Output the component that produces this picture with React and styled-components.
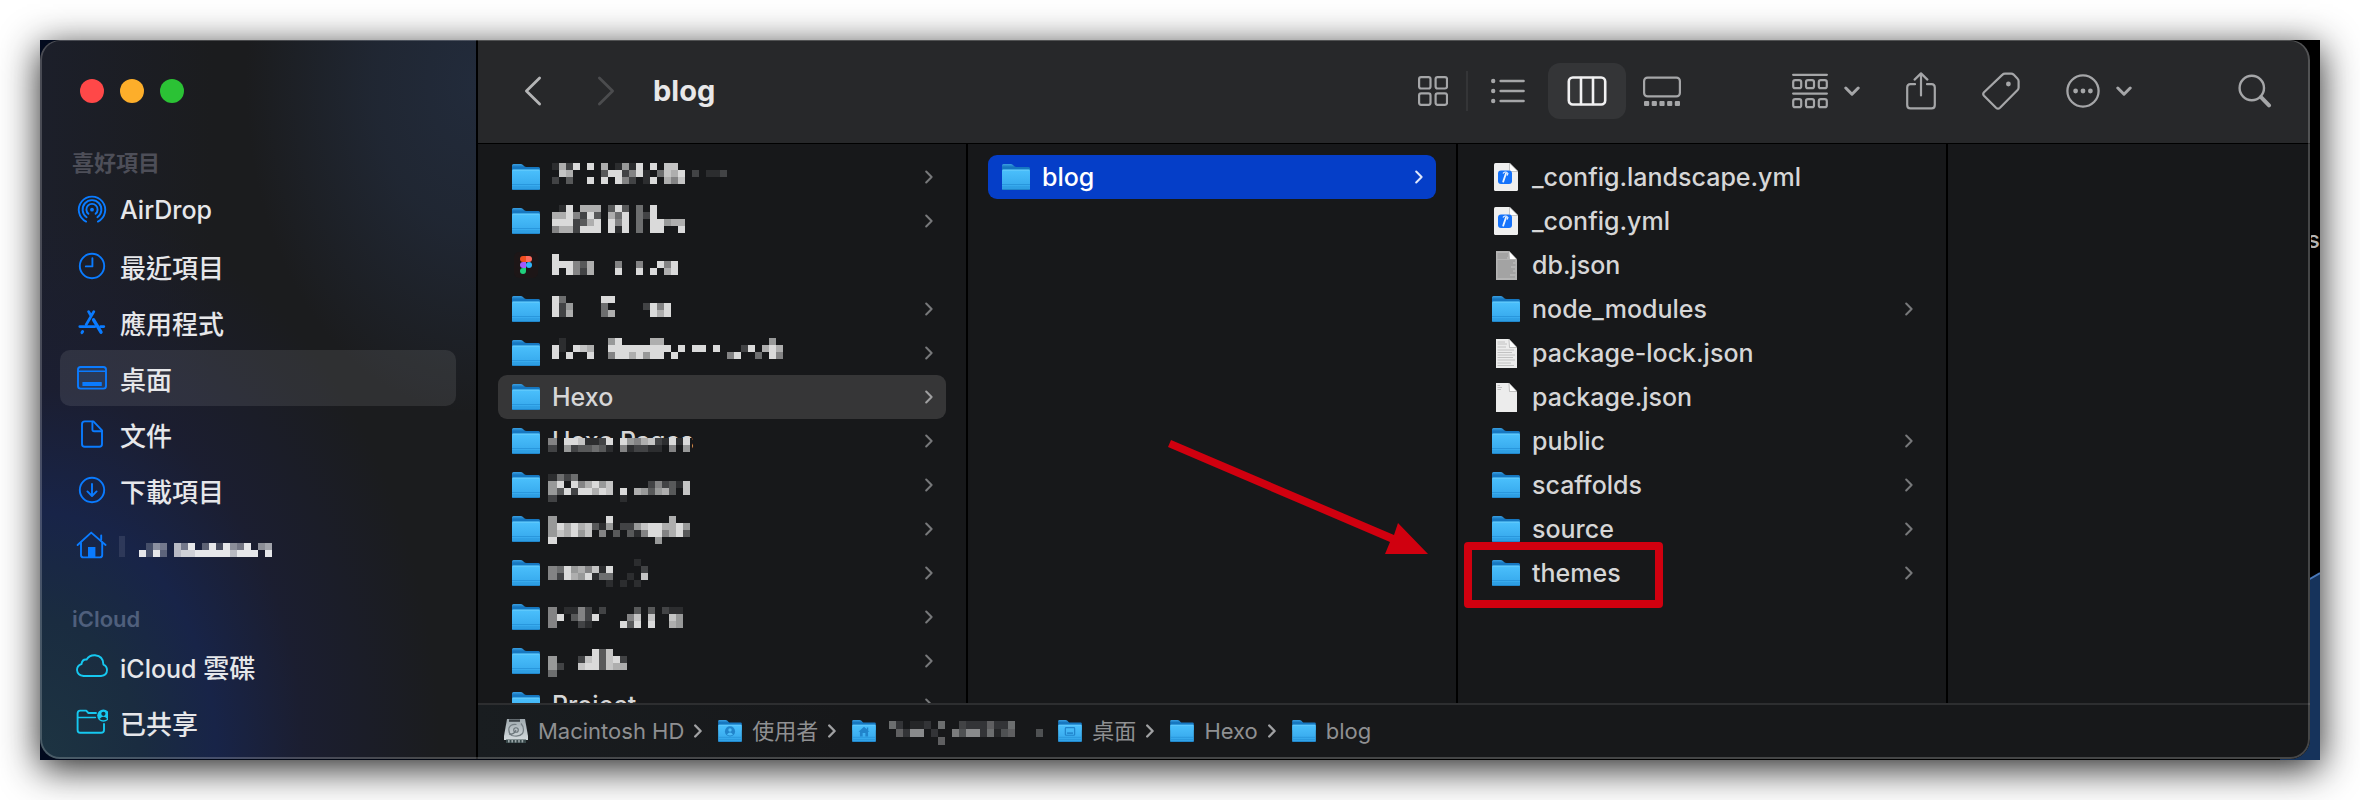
import React from "react";
import styled, { createGlobalStyle } from "styled-components";

const GlobalStyle = createGlobalStyle`
  * { box-sizing: border-box; }
  body {
    margin: 0;
    background: #fff;
    font-family: Inter, "Noto Sans CJK TC", sans-serif;
    -webkit-font-smoothing: antialiased;
  }
  button { font: inherit; color: inherit; background: none; border: 0; padding: 0; }
  ul, ol { list-style: none; margin: 0; padding: 0; }
  svg { display: block; flex: none; }
`;

const Page = styled.div`
  padding: 40px;
`;

const Desktop = styled.div`
  position: relative;
  display: flex;
  height: calc(100vh - 80px);
  min-height: 480px;
  padding: 0 10px 1px 0;
  background: linear-gradient(90deg, #020a1e, #000 40%);
  box-shadow: 0 8px 36px rgba(0, 0, 0, 0.88);
`;

const Wallpaper = styled.svg`
  position: absolute;
  right: 0;
  bottom: 0;
`;

const DesktopLabel = styled.span`
  position: absolute;
  right: 0;
  top: 184px;
  width: 9px;
  overflow: hidden;
  font-size: 24px;
  line-height: 32px;
  font-weight: 500;
  color: #b5b5b5;
  direction: rtl;
`;

const Window = styled.div`
  position: relative;
  flex: 1;
  min-width: 0;
  display: flex;
  border-radius: 20px;
  overflow: hidden;
  background: #17181a;
  color: #dcdcdd;
  &::after {
    content: "";
    position: absolute;
    inset: 0;
    border: 2px solid rgba(255, 255, 255, 0.2);
    border-top-width: 1px;
    border-radius: 20px;
    pointer-events: none;
  }
`;

const Sidebar = styled.nav`
  flex: 0 0 438px;
  padding: 39px 20px 0;
  overflow: hidden;
  border-right: 2px solid #000;
  background:
    radial-gradient(ellipse 230px 330px at 100% 6%, #222b3b 0%, rgba(34, 43, 59, 0.7) 45%, rgba(28, 29, 31, 0) 100%),
    radial-gradient(ellipse 400px 560px at 0% 100%, #1d3442 0%, #1a2c40 25%, #182448 44%, rgba(27, 30, 50, 0.9) 66%, rgba(28, 29, 31, 0) 100%),
    linear-gradient(90deg, #1c1f2a, #1b1c1e 40%);
`;

const Lights = styled.div`
  display: flex;
  gap: 16px;
  padding-left: 20px;
  margin-bottom: 41px;
`;

const Light = styled.button`
  width: 24px;
  height: 24px;
  border-radius: 50%;
  background: ${(p) => p.$color};
`;

const GroupTitle = styled.h2`
  margin: 26px 0 0;
  padding-left: 12px;
  font-size: 22px;
  line-height: 38px;
  font-weight: 600;
  color: ${(p) => p.$color};
`;

const Place = styled.a`
  display: flex;
  align-items: center;
  height: 56px;
  padding-left: 16px;
  gap: 12px;
  border-radius: 10px;
  font-size: 26px;
  font-weight: 500;
  color: #e6e7ea;
  text-decoration: none;
  background: ${(p) => (p.$current ? "rgba(255, 255, 255, 0.09)" : "none")};
`;

const Latin = styled.span`
  font-size: 25px;
`;

const Main = styled.main`
  flex: 1;
  min-width: 0;
  display: flex;
  flex-direction: column;
`;

const Toolbar = styled.header`
  flex: 0 0 104px;
  display: flex;
  align-items: center;
  padding: 0 38px 2px 39px;
  background: #27282a;
  border-bottom: 1px solid #000;
  color: #a5a6a8;
`;

const NavButton = styled.button`
  display: grid;
  place-items: center;
  width: 32px;
  height: 56px;
  margin-right: 41px;
  color: ${(p) => (p.disabled ? "#4b4c4e" : "#b4b5b6")};
`;

const Title = styled.h1`
  flex: 1;
  margin: 0 0 0 -10px;
  font-size: 29px;
  line-height: 40px;
  font-weight: 700;
  color: #e8e8e9;
`;

const Views = styled.div`
  display: flex;
  align-items: center;
  margin-right: 94px;
`;

const ViewButton = styled.button`
  display: grid;
  place-items: center;
  width: ${(p) => p.$width}px;
  height: 56px;
  border-radius: 12px;
  background: ${(p) => (p.$active ? "#343537" : "none")};
  color: ${(p) => (p.$active ? "#f1f1f2" : "inherit")};
`;

const Separator = styled.span`
  width: 2px;
  height: 40px;
  background: #343537;
`;

const Actions = styled.div`
  display: flex;
  align-items: center;
  gap: 46px;
`;

const Action = styled.button`
  display: flex;
  align-items: center;
  gap: 16px;
`;

const SearchAction = styled(Action)`
  margin-left: 60px;
`;

const Columns = styled.div`
  flex: 1;
  min-height: 0;
  display: flex;
  overflow: hidden;
`;

const Column = styled.ul`
  flex: 0 0 490px;
  padding: 11px 20px 0;
  border-right: 2px solid #000;
`;

const LastColumn = styled.div`
  flex: 1;
`;

const Item = styled.li`
  position: relative;
`;

const Row = styled.button`
  display: flex;
  align-items: center;
  gap: 12px;
  width: 100%;
  height: 44px;
  padding: 0 13px 0 14px;
  border-radius: 9px;
  text-align: left;
  font-size: 25px;
  line-height: 32px;
  font-weight: 500;
  background: ${(p) => ({ active: "#053ec8", open: "#363637" })[p.$tone] || "none"};
  color: ${(p) => (p.$tone === "active" ? "#fff" : "#d6d6d7")};
  --chevron: ${(p) => ({ active: "#dfe6fa", open: "#a0a0a1" })[p.$tone] || "#77787a"};
`;

const IconSlot = styled.span`
  flex: none;
  display: grid;
  place-items: center;
  width: 28px;
  height: 44px;
`;

const Label = styled.span`
  flex: 1;
  position: relative;
  white-space: nowrap;
`;

const Censor = styled.span`
  position: absolute;
  left: 0;
  top: -6px;
`;

const PixelArt = styled.svg`
  overflow: visible;
  color: ${(p) => p.$tone || "#dadada"};
`;

const Frame = styled.span`
  position: absolute;
  left: -14px;
  top: -9px;
  width: 199px;
  height: 66px;
  border: 8px solid #d0000f;
  border-radius: 4px;
  pointer-events: none;
`;

const Arrow = styled.svg`
  position: absolute;
  left: -310px;
  top: -112px;
  pointer-events: none;
`;

const PathBar = styled.footer`
  flex: 0 0 56px;
  padding: 0 0 2px 26px;
  border-top: 2px solid #2d2e30;
  background: linear-gradient(90deg, #191d20, #17181a 20%);
`;

const PathList = styled.ol`
  display: flex;
  align-items: center;
  height: 52px;
  gap: 16px;
`;

const PathItem = styled.li`
  display: flex;
  align-items: center;
  gap: 10px;
  font-size: 22px;
  line-height: 32px;
  color: #8f9092;
`;

const HiddenDefs = styled.svg`
  position: absolute;
`;

/* ---------- icons ---------- */

const Defs = () => (
  <HiddenDefs width="0" height="0" aria-hidden="true">
    <defs>
      <linearGradient id="folderBack" x1="0" y1="0" x2="0" y2="1">
        <stop offset="0" stopColor="#3aa0e2" />
        <stop offset="0.25" stopColor="#1677c0" />
      </linearGradient>
      <linearGradient id="folderFront" x1="0" y1="0" x2="0" y2="1">
        <stop offset="0" stopColor="#4bc0fc" />
        <stop offset="1" stopColor="#33a5ea" />
      </linearGradient>
      <linearGradient id="disk" x1="0" y1="0" x2="0" y2="1">
        <stop offset="0" stopColor="#9fa9ae" />
        <stop offset="1" stopColor="#d3dadd" />
      </linearGradient>
    </defs>
  </HiddenDefs>
);

const Folder = ({ width = 28, height = 26, mark }) => (
  <svg width={width} height={height} viewBox="0 0 28 26">
    <path d="M0 1.5Q0 0 1.5 0H8.5Q10 0 11 1L12 2Q13 3 14.5 3H26.5Q28 3 28 4.5V12H0Z" fill="url(#folderBack)" />
    <path d="M0 7Q0 5.6 1.5 5.6H26.5Q28 5.6 28 7V24.5Q28 26 26.5 26H1.5Q0 26 0 24.5Z" fill="url(#folderFront)" />
    <path d="M0 20.5H28M0 23H28" stroke="#2794da" strokeWidth="0.9" />
    <path d="M0.3 25.3H27.7" stroke="#1c7fc4" strokeWidth="1" />
    <path d="M0.5 6.2H27.5" stroke="#6fcffd" strokeWidth="0.8" />
    {mark === "user" && (
      <g>
        <circle cx="14" cy="13.5" r="6" fill="#2184cb" />
        <circle cx="14" cy="11.8" r="2" fill="#4bbcf8" />
        <path d="M10.4 17Q14 12.6 17.6 17Q14 19.6 10.4 17Z" fill="#4bbcf8" />
      </g>
    )}
    {mark === "home" && (
      <path d="M7.5 14L14 8L17.4 11V9H19V12.6L20.5 14H18.8V19.5H15.6V15.5H12.4V19.5H9.2V14Z" fill="#2184cb" />
    )}
    {mark === "desktop" && (
      <g>
        <rect x="8.5" y="9" width="11" height="9" rx="1" fill="none" stroke="#2184cb" strokeWidth="1.4" />
        <path d="M10.5 15.5H17.5" stroke="#2184cb" strokeWidth="1.8" />
      </g>
    )}
  </svg>
);

const FigmaFile = () => (
  <svg width="28" height="28" viewBox="0 0 28 28">
    <rect x="2" y="1" width="24" height="26" rx="5" fill="#1d1617" />
    <path d="M11 5H14V11H11A3 3 0 0 1 11 5Z" fill="#f24e1e" />
    <path d="M14 5H17A3 3 0 0 1 17 11H14Z" fill="#ff6a5e" />
    <path d="M11 11H14V17H11A3 3 0 0 1 11 11Z" fill="#a259ff" />
    <circle cx="17" cy="14" r="3" fill="#2fb4fa" />
    <path d="M11 17H14V20A3 3 0 1 1 11 17Z" fill="#20cf7d" />
  </svg>
);

const YmlFile = () => (
  <svg width="24" height="28" viewBox="0 0 24 28">
    <path d="M1.5 0H15.5L24 8.5V26.5Q24 28 22.5 28H1.5Q0 28 0 26.5V1.5Q0 0 1.5 0Z" fill="#efefef" />
    <path d="M15.5 0L24 8.5H17Q15.5 8.5 15.5 7Z" fill="#fff" stroke="#b9b9b9" strokeWidth="0.8" />
    <rect x="4" y="7.5" width="14" height="13.5" rx="3" fill="#1472fb" />
    <path d="M9.2 18.6L12 10.4" stroke="#e9f2ff" strokeWidth="1.8" fill="none" strokeLinecap="round" />
    <path d="M9.2 10.2Q10.6 8.6 12.6 9.2L14 10.6L13.2 12.2" stroke="#e9f2ff" strokeWidth="1.1" fill="none" strokeLinecap="round" />
  </svg>
);

const TextFile = ({ shade = "#ececec", lines = [], ink = "#bdbdbd" }) => (
  <svg width="21" height="29" viewBox="0 0 21 29">
    <path d="M0 0H13L21 8.5V29H0Z" fill={shade} />
    {lines.map(([y, w]) => (
      <path key={y} d={`M1.5 ${y}H${w}`} stroke={ink} strokeWidth="0.9" />
    ))}
    <path d="M13 0L21 8.5H13.5Z" fill="#fff" stroke="#8d8d8d" strokeWidth="0.5" />
  </svg>
);

const dbLines = [[3, 12], [5, 12], [7, 11], [10, 19], [12, 17], [14, 19.5], [16, 15], [18, 19], [20, 17], [22, 19.5], [24, 14], [26, 19]];
const lockLines = [[3, 9], [5, 11], [8, 10], [11, 18], [13.5, 16], [16, 19], [18.5, 17], [21, 19], [24, 15], [26.5, 18]];
const packageLines = [[2.5, 4], [4.5, 6], [6.5, 5]];

const Disk = () => (
  <svg width="24" height="24" viewBox="0 0 24 24">
    <path d="M3 0H21L24 17V21H0V17Z" fill="url(#disk)" />
    <path d="M5 1.6H16" stroke="#3b4246" strokeWidth="2.4" />
    <path d="M2 20.5H22V24H2Z" fill="#39494b" />
    <path d="M4 22.3H20" stroke="#9aa5a8" strokeWidth="2.4" strokeDasharray="1.6 1.8" />
    <path d="M17 4.5Q21 9 18.5 14.5Q15 18.5 8 16.5Q4 14 5 9Q7 4.5 12.5 5.5" stroke="#747e83" strokeWidth="1.2" fill="none" />
    <circle cx="12" cy="11" r="2.3" fill="none" stroke="#6a7479" strokeWidth="1.1" />
    <path d="M12 11Q10 16 5 15" stroke="#6a7479" strokeWidth="1.1" fill="none" />
  </svg>
);

const Chevron = ({ color = "var(--chevron)", strokeWidth = 2 }) => (
  <svg width="8" height="14" viewBox="0 0 8 14" fill="none" stroke={color} strokeWidth={strokeWidth} strokeLinecap="round" strokeLinejoin="round">
    <path d="M1.2 1.5L6.6 7L1.2 12.5" />
  </svg>
);

const line = { fill: "none", stroke: "currentColor", strokeLinecap: "round", strokeLinejoin: "round" };

const NavArrow = ({ d }) => (
  <svg width="18" height="30" viewBox="0 0 18 30" {...line} strokeWidth="2.8">
    <path d={d} />
  </svg>
);

const DownChevron = () => (
  <svg width="16" height="12" viewBox="0 0 16 12" {...line} strokeWidth="3">
    <path d="M1.8 3L8 9.2L14.2 3" />
  </svg>
);

const GridIcon = () => (
  <svg width="30" height="30" viewBox="0 0 30 30" {...line} strokeWidth="2.2">
    {[1.1, 17.6].map((x) => [1.1, 17.4].map((y) => <rect key={`${x}${y}`} x={x} y={y} width="11.4" height="11.4" rx="2" />))}
  </svg>
);

const ListIcon = () => (
  <svg width="34" height="26" viewBox="0 0 34 26" {...line} strokeWidth="2.4">
    {[3, 13, 23].map((y) => (
      <g key={y}>
        <circle cx="2.2" cy={y} r="2.2" fill="currentColor" stroke="none" />
        <path d={`M9.6 ${y}H32.6`} />
      </g>
    ))}
  </svg>
);

const ColumnsIcon = () => (
  <svg width="40" height="30" viewBox="0 0 40 30" {...line} strokeWidth="2.6">
    <rect x="1.8" y="1.5" width="36.4" height="27" rx="4" />
    <path d="M14 2V28M26 2V28" />
  </svg>
);

const GalleryIcon = () => (
  <svg width="38" height="30" viewBox="0 0 38 30" {...line} strokeWidth="2.2">
    <rect x="1.1" y="1.6" width="35.8" height="18.8" rx="3.5" />
    {[1, 8.7, 16.4, 24.1, 31.8].map((x) => (
      <rect key={x} x={x} y="25" width="5.2" height="5" rx="1" fill="currentColor" stroke="none" />
    ))}
  </svg>
);

const GroupIcon = () => (
  <svg width="36" height="36" viewBox="0 0 36 36" {...line} strokeWidth="2.2">
    <path d="M1.1 1.8H34.9M1.1 20.6H34.9" />
    {[7.2, 26.2].map((y) => [1.2, 14, 26.8].map((x) => <rect key={`${x}${y}`} x={x} y={y} width="8" height="8" rx="2" />))}
  </svg>
);

const ShareIcon = () => (
  <svg width="30" height="38" viewBox="0 0 30 38" {...line} strokeWidth="2.2">
    <path d="M9 12.2H4.4Q1.2 12.2 1.2 15.4V33Q1.2 36.4 4.4 36.4H25.6Q28.8 36.4 28.8 33V15.4Q28.8 12.2 25.6 12.2H21" />
    <path d="M15 23.5V1.6M8.6 7.6L15 1.4L21.4 7.6" />
  </svg>
);

const TagIcon = () => (
  <svg width="38" height="38" viewBox="0 0 38 38" {...line} strokeWidth="2.2">
    <path d="M20.5 2.6Q21.5 1.6 23 1.6H29.2Q30.6 1.6 31.6 2.6L35.6 6.8Q36.6 7.8 36.6 9.2V15.6Q36.6 17 35.6 18L18 35.8Q16 37.6 14 35.8L2 23.8Q0.4 22 2 20.2Z" />
    <circle cx="26.4" cy="12" r="2.4" fill="currentColor" stroke="none" />
  </svg>
);

const MoreIcon = () => (
  <svg width="34" height="34" viewBox="0 0 34 34" {...line} strokeWidth="2.3">
    <circle cx="17" cy="17" r="15.6" />
    {[9.6, 17, 24.4].map((x) => <circle key={x} cx={x} cy="17" r="2.4" fill="currentColor" stroke="none" />)}
  </svg>
);

const SearchIcon = () => (
  <svg width="34" height="34" viewBox="0 0 34 34" {...line} strokeWidth="2.4">
    <circle cx="13.8" cy="14" r="12.2" />
    <path d="M23 23.2L31 31.4" strokeWidth="4" />
  </svg>
);

const blue = "#0a7bff";
const cyan = "#16c8f0";
const Side = ({ color = blue, children }) => (
  <svg width="32" height="32" viewBox="0 0 32 32" {...line} stroke={color} strokeWidth="1.9">
    {children}
  </svg>
);

const AirDropIcon = () => (
  <Side>
    <path d="M10.1 27.6A13.2 13.2 0 1 1 21.9 27.6" />
    <path d="M10.6 23.2A9.4 9.4 0 1 1 21.4 23.2" />
    <path d="M12.4 19.8A5.6 5.6 0 1 1 19.6 19.8" />
    <circle cx="16" cy="15.7" r="1.9" fill={blue} stroke="none" />
  </Side>
);
const ClockIcon = () => (
  <Side>
    <circle cx="16" cy="16" r="12.2" />
    <path d="M16.4 8.2V16.4H9.8" />
  </Side>
);
const AppsIcon = () => (
  <Side>
    <path d="M17.8 5.6L10.2 18.6M12.6 5.6L15.2 10" strokeWidth="2.8" />
    <path d="M3.8 20.6H19M24.6 20.6H27.8" strokeWidth="2.8" />
    <path d="M17.6 13.8L25 26.2" strokeWidth="3.4" />
    <path d="M6.6 25.6L6 26.6" strokeWidth="3" />
  </Side>
);
const DesktopIcon = () => (
  <Side>
    <rect x="2" y="5" width="28" height="21.6" rx="2.6" fill="rgba(10,123,255,0.12)" />
    <path d="M2.4 9.2H29.6" strokeWidth="1.5" />
    <rect x="6.4" y="20" width="19.4" height="4" rx="0.6" fill={blue} stroke="none" />
  </Side>
);
const DocIcon = () => (
  <Side>
    <path d="M17.4 3.4H8.8Q6 3.4 6 6.2V26Q6 28.8 8.8 28.8H23.2Q26 28.8 26 26V12.4Z" />
    <path d="M16.4 3.6V11.4Q16.4 13.2 18.2 13.2H25.8" />
  </Side>
);
const DownloadIcon = () => (
  <Side>
    <circle cx="16" cy="16" r="12.2" />
    <path d="M16 10V21.4M11.4 17.4L16 22L20.6 17.4" />
  </Side>
);
const HomeIcon = () => (
  <Side>
    <path d="M1.6 15L15.2 2.6L29.6 15" />
    <path d="M5 13V25Q5 27.4 7.4 27.4H23.8Q26.2 27.4 26.2 25V12.4M25.2 9.6V5.4" />
    <rect x="12" y="17" width="7.4" height="10.6" fill={blue} stroke="none" />
  </Side>
);
const CloudIcon = () => (
  <Side color={cyan}>
    <path d="M7.6 26H25Q31 25.4 31 20Q31 16 27.4 14.6Q27.4 5.8 19 5.2Q13 5 10.6 9.6Q6.4 9 5.4 14.2Q1 15.8 1 20Q1.4 25.4 7.6 26Z" />
  </Side>
);
const SharedIcon = () => (
  <Side color={cyan}>
    <path d="M20 7H12.4L10.2 4.6H4.2Q1.6 4.8 1.6 7.4V24Q1.6 26.8 4.2 26.8H25Q28 26.8 28 24V18" />
    <path d="M2 11.6H19.4" strokeWidth="1.5" />
    <circle cx="27.4" cy="9.6" r="6.2" fill={cyan} stroke="none" />
    <circle cx="27.4" cy="7.8" r="2.1" fill="#16303f" stroke="none" />
    <path d="M23.6 13Q27.4 8.6 31.2 13Q27.4 15.6 23.6 13Z" fill="#16303f" stroke="none" />
  </Side>
);

/* ---------- pixelated names ---------- */

/* Each string is one line of cells; a digit is the cell's strength from 0 to 9. */
function Pixels({ cells, x = 0, y = 0, first = 7, cellHeight = 7, width = 240, height = 44, tone, backing }) {
  const left = (i) => (i === 0 ? x : x + first + (i - 1) * 7);
  return (
    <PixelArt width={width} height={height} $tone={tone} shapeRendering="crispEdges" aria-hidden="true">
      {backing && <rect x={x} y={y} width={144} height={cells.length * cellHeight + 9} fill={backing} />}
      {cells.map((rowCells, j) =>
        [...rowCells].map((level, i) =>
          level === "0" ? null : (
            <rect
              key={`${i}-${j}`}
              x={left(i)}
              y={y + j * cellHeight}
              width={i === 0 ? first : 7}
              height={cellHeight}
              fill="currentColor"
              opacity={Math.min(1, level / 9)}
            />
          )
        )
      )}
    </PixelArt>
  );
}

/* ---------- data ---------- */

const wide = { x: -4, first: 9 };

const homeItems = [
  { pixels: { y: 8, cells: ["1729090701619090880", "0870000399259104879020112", "2030090909520190758"] } },
  { pixels: { y: 6, cells: ["019077703930409", "779529307490429", "9992379095904099677", "5772999091904099009"] } },
  { icon: <FigmaFile />, file: true, pixels: { y: 11, cells: ["9", "999537000500500959", "909527000900909079"] } },
  { pixels: { y: 9, cells: ["940000099", "92600004000002959", "92700004700000979"] } },
  {
    pixels: {
      y: 7,
      cells: [
        "01000000690000770000000000000006",
        "910987009999999990909909000290797",
        "909009005997969909000000059004095",
      ],
    },
  },
  { name: "Hexo", tone: "open" },
  { name: "Hexo Pages", censor: { ...wide, y: 19, cells: ["50998112909657821919", "20623343105122110506"] } },
  { pixels: { ...wide, y: 11, cells: ["1424", "69095796800000252318", "63929979809076367308", "20000000001"] } },
  { pixels: { ...wide, y: 9, cells: ["60000000900000000700", "69797831602268997796", "68796805030315995793", "9000000000000006"] } },
  { pixels: { ...wide, y: 8, cells: ["0000000000001", "54967581900002", "52976914400108", "0000000010101"] } },
  { pixels: { ...wide, y: 12, cells: ["5011520200003030211", "5903529000058080086", "5000210000939090076"] } },
  { pixels: { ...wide, y: 10, cells: ["000000938", "60002893892", "62008993877", "4"] } },
  { name: "Project" },
];

const projectItems = [
  { name: "_config.landscape.yml", icon: <YmlFile />, file: true },
  { name: "_config.yml", icon: <YmlFile />, file: true },
  { name: "db.json", icon: <TextFile shade="#b4b4b4" ink="#8f8f8f" lines={dbLines} />, file: true },
  { name: "node_modules" },
  { name: "package-lock.json", icon: <TextFile lines={lockLines} />, file: true },
  { name: "package.json", icon: <TextFile lines={packageLines} />, file: true },
  { name: "public" },
  { name: "scaffolds" },
  { name: "source" },
  { name: "themes", marked: true },
];

const favourites = [
  ["最近項目", <ClockIcon />],
  ["應用程式", <AppsIcon />],
  ["桌面", <DesktopIcon />],
  ["文件", <DocIcon />],
  ["下載項目", <DownloadIcon />],
];

/* ---------- parts ---------- */

const FileRow = ({ name, icon, file, tone, pixels, censor, marked }) => (
  <Item>
    <Row type="button" $tone={tone} aria-label={name || "item"}>
      <IconSlot>{icon || <Folder />}</IconSlot>
      <Label>
        {name}
        {pixels && <Pixels {...pixels} />}
        {censor && (
          <Censor>
            <Pixels {...censor} backing="#17181a" />
          </Censor>
        )}
      </Label>
      {!file && <Chevron />}
    </Row>
    {marked && (
      <>
        <Frame />
        <Arrow width="262" height="118" viewBox="0 0 262 118" aria-hidden="true">
          <path d="M3 1L226 96L230 84L260 115L217 115L222 103L0 8Z" fill="#d0000f" />
        </Arrow>
      </>
    )}
  </Item>
);

const Crumb = ({ icon, children, last }) => (
  <PathItem>
    {icon}
    {children}
    {!last && <Chevron color="#a0a1a3" strokeWidth={2.4} />}
  </PathItem>
);

export default function App() {
  return (
    <Page>
      <GlobalStyle />
      <Defs />
      <Desktop>
        <Wallpaper width="40" height="190" viewBox="0 0 40 190" aria-hidden="true">
          <path d="M0 26L40 3V190H0Z" fill="#16335b" />
          <path d="M28 10L40 3" stroke="#4a78b8" strokeWidth="2" />
        </Wallpaper>
        <DesktopLabel>s</DesktopLabel>
        <Window>
          <Sidebar aria-label="Sidebar">
            <Lights>
              <Light type="button" aria-label="Close" $color="#ff4848" />
              <Light type="button" aria-label="Minimize" $color="#fdae2a" />
              <Light type="button" aria-label="Zoom" $color="#2bc235" />
            </Lights>
            <GroupTitle $color="#4d4e58">喜好項目</GroupTitle>
            <Place href="#">
              <AirDropIcon />
              <Latin>AirDrop</Latin>
            </Place>
            {favourites.map(([name, icon]) => (
              <Place key={name} href="#" $current={name === "桌面"}>
                {icon}
                {name}
              </Place>
            ))}
            <Place href="#" aria-label="Home">
              <HomeIcon />
              <Pixels
                x={-1}
                y={14}
                first={6}
                width={160}
                height={48}
                tone="#e6e7ea"
                cells={["1", "1000254074903929549056", "1009293078899999799909"]}
              />
            </Place>
            <GroupTitle $color="#4f5f7c">iCloud</GroupTitle>
            <Place href="#">
              <CloudIcon />
              <span>
                <Latin>iCloud </Latin>雲碟
              </span>
            </Place>
            <Place href="#">
              <SharedIcon />
              已共享
            </Place>
          </Sidebar>
          <Main>
            <Toolbar>
              <NavButton type="button" aria-label="Back">
                <NavArrow d="M15.6 2L2.4 15L15.6 28" />
              </NavButton>
              <NavButton type="button" aria-label="Forward" disabled>
                <NavArrow d="M2.4 2L15.6 15L2.4 28" />
              </NavButton>
              <Title>blog</Title>
              <Views>
                <ViewButton type="button" aria-label="Icons" $width={66}><GridIcon /></ViewButton>
                <Separator />
                <ViewButton type="button" aria-label="List" $width={80}><ListIcon /></ViewButton>
                <ViewButton type="button" aria-label="Columns" $width={78} $active><ColumnsIcon /></ViewButton>
                <ViewButton type="button" aria-label="Gallery" $width={72}><GalleryIcon /></ViewButton>
              </Views>
              <Actions>
                <Action type="button" aria-label="Group"><GroupIcon /><DownChevron /></Action>
                <Action type="button" aria-label="Share"><ShareIcon /></Action>
                <Action type="button" aria-label="Tags"><TagIcon /></Action>
                <Action type="button" aria-label="More"><MoreIcon /><DownChevron /></Action>
                <SearchAction type="button" aria-label="Search"><SearchIcon /></SearchAction>
              </Actions>
            </Toolbar>
            <Columns>
              <Column>
                {homeItems.map((item, i) => <FileRow key={i} {...item} />)}
              </Column>
              <Column>
                <FileRow name="blog" tone="active" />
              </Column>
              <Column>
                {projectItems.map((item) => <FileRow key={item.name} {...item} />)}
              </Column>
              <LastColumn />
            </Columns>
            <PathBar>
              <PathList>
                <Crumb icon={<Disk />}>Macintosh HD</Crumb>
                <Crumb icon={<Folder width={24} height={22} mark="user" />}>使用者</Crumb>
                <Crumb icon={<Folder width={24} height={22} mark="home" />} last>
                  <Pixels
                    x={3}
                    y={10}
                    width={156}
                    height={40}
                    cellHeight={8}
                    tone="#98999b"
                    cells={["620112060032225226", "0528802007488261450004", "00000005"]}
                  />
                </Crumb>
                <Crumb icon={<Folder width={24} height={22} mark="desktop" />}>桌面</Crumb>
                <Crumb icon={<Folder width={24} height={22} />}>Hexo</Crumb>
                <Crumb icon={<Folder width={24} height={22} />} last>blog</Crumb>
              </PathList>
            </PathBar>
          </Main>
        </Window>
      </Desktop>
    </Page>
  );
}
